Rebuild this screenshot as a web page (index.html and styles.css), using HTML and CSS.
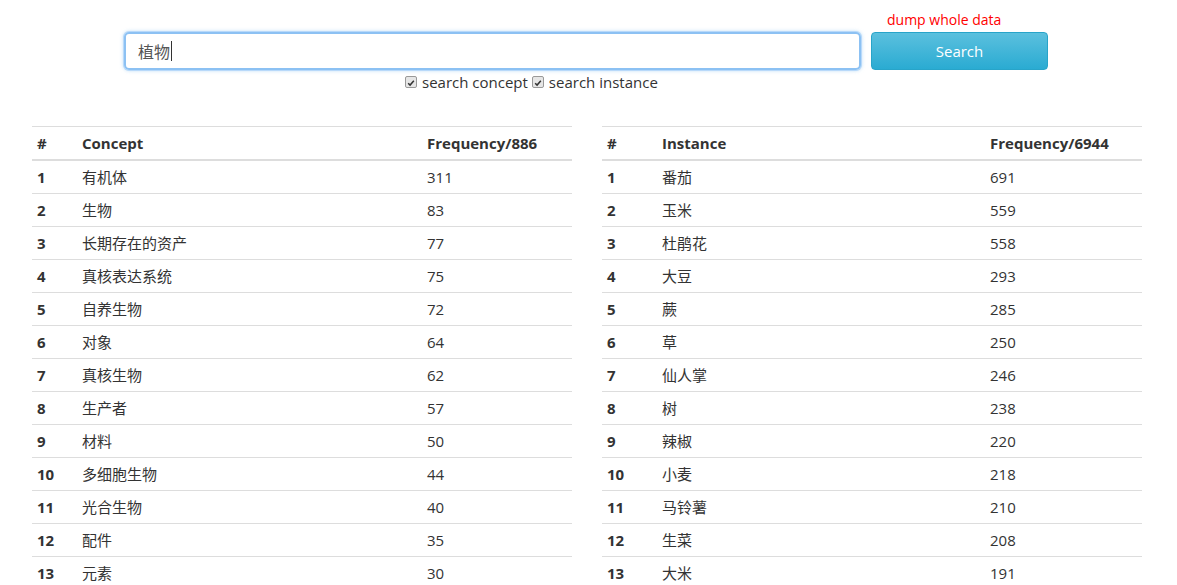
FILE: index.html
```html
<!DOCTYPE html>
<html lang="zh">
<head>
<meta charset="utf-8">
<title>Concept search</title>
<link rel="stylesheet" href="styles.css">
</head>
<body>
<div class="search-area">
  <div class="search-row">
    <div class="input-col">
      <div class="search-input">植物<span class="caret"></span></div>
    </div>
    <div class="button-col">
      <a class="dump-link" href="#">dump whole data</a>
      <button class="btn-search">Search</button>
    </div>
  </div>
  <div class="options">
    <label class="opt"><span class="check"><svg viewBox="0 0 12 12" width="12" height="12"><path d="M2.6 6.2 L4.9 8.5 L9.4 3.4" fill="none" stroke="#333" stroke-width="1.8"/></svg></span>search concept</label>
    <label class="opt"><span class="check"><svg viewBox="0 0 12 12" width="12" height="12"><path d="M2.6 6.2 L4.9 8.5 L9.4 3.4" fill="none" stroke="#333" stroke-width="1.8"/></svg></span>search instance</label>
  </div>
</div>
<div class="tables">
  <table class="result left">
    <thead><tr><th class="c-num">#</th><th class="c-name">Concept</th><th class="c-freq">Frequency/886</th></tr></thead>
    <tbody>
      <tr><th>1</th><td>有机体</td><td>311</td></tr>
      <tr><th>2</th><td>生物</td><td>83</td></tr>
      <tr><th>3</th><td>长期存在的资产</td><td>77</td></tr>
      <tr><th>4</th><td>真核表达系统</td><td>75</td></tr>
      <tr><th>5</th><td>自养生物</td><td>72</td></tr>
      <tr><th>6</th><td>对象</td><td>64</td></tr>
      <tr><th>7</th><td>真核生物</td><td>62</td></tr>
      <tr><th>8</th><td>生产者</td><td>57</td></tr>
      <tr><th>9</th><td>材料</td><td>50</td></tr>
      <tr><th>10</th><td>多细胞生物</td><td>44</td></tr>
      <tr><th>11</th><td>光合生物</td><td>40</td></tr>
      <tr><th>12</th><td>配件</td><td>35</td></tr>
      <tr><th>13</th><td>元素</td><td>30</td></tr>
    </tbody>
  </table>
  <table class="result right">
    <thead><tr><th class="c-num">#</th><th class="c-name">Instance</th><th class="c-freq">Frequency/6944</th></tr></thead>
    <tbody>
      <tr><th>1</th><td>番茄</td><td>691</td></tr>
      <tr><th>2</th><td>玉米</td><td>559</td></tr>
      <tr><th>3</th><td>杜鹃花</td><td>558</td></tr>
      <tr><th>4</th><td>大豆</td><td>293</td></tr>
      <tr><th>5</th><td>蕨</td><td>285</td></tr>
      <tr><th>6</th><td>草</td><td>250</td></tr>
      <tr><th>7</th><td>仙人掌</td><td>246</td></tr>
      <tr><th>8</th><td>树</td><td>238</td></tr>
      <tr><th>9</th><td>辣椒</td><td>220</td></tr>
      <tr><th>10</th><td>小麦</td><td>218</td></tr>
      <tr><th>11</th><td>马铃薯</td><td>210</td></tr>
      <tr><th>12</th><td>生菜</td><td>208</td></tr>
      <tr><th>13</th><td>大米</td><td>191</td></tr>
    </tbody>
  </table>
</div>
</body>
</html>
```
FILE: styles.css
```css
html { overflow: hidden; }
body {
  margin: 0;
  background: #fff;
  color: #333;
  font-family: "Open Sans", "Noto Sans CJK SC", sans-serif;
  font-size: 15px;
}
.search-area {
  padding-top: 10px;
}
.search-row {
  display: flex;
  padding-left: 124px;
  gap: 10px;
}
.input-col {
  padding-top: 22px;
}
.search-input {
  box-sizing: border-box;
  width: 737px;
  height: 38px;
  border: 2px solid #8cc1f3;
  border-radius: 5px;
  box-shadow: 0 0 0 1px rgba(180, 215, 250, 0.9), 0 0 4px rgba(102, 175, 233, 0.6);
  padding: 0 12px;
  display: flex;
  align-items: center;
  font-size: 16px;
  color: #555;
}
.caret {
  display: inline-block;
  width: 1px;
  height: 20px;
  background: #333;
  margin-left: 1px;
}
.button-col {
  display: flex;
  flex-direction: column;
  width: 177px;
}
.dump-link {
  display: block;
  height: 22px;
  line-height: 20px;
  padding-left: 16px;
  color: #f00;
  text-decoration: none;
  font-size: 14px;
}
.btn-search {
  box-sizing: border-box;
  height: 38px;
  width: 177px;
  border: 1px solid #28a4c9;
  border-radius: 4px;
  background: linear-gradient(#5bc0de, #2aabd2);
  color: #fff;
  font-family: inherit;
  font-size: 15px;
  padding: 0;
}
.options {
  display: flex;
  gap: 4px;
  padding-left: 405px;
  margin-top: 2px;
  height: 20px;
  align-items: center;
  color: #333;
}
.opt {
  display: flex;
  align-items: center;
  gap: 5px;
}
.check {
  box-sizing: border-box;
  width: 12px;
  height: 12px;
  border: 1px solid #999;
  border-radius: 2px;
  background: #e6e6e6;
  display: flex;
}
.check svg { display: block; }
.tables {
  display: flex;
  gap: 30px;
  padding-left: 32px;
  margin-top: 34px;
}
.result {
  width: 540px;
  border-collapse: collapse;
  border-spacing: 0;
}
.result th, .result td {
  padding: 5px;
  line-height: 22px;
  border-top: 1px solid #ddd;
  text-align: left;
  vertical-align: top;
}
.result th { font-weight: bold; }
.result thead th {
  border-bottom: 2px solid #ddd;
}
.left .c-num { width: 35px; }
.left .c-name { width: 335px; }
.right .c-num { width: 45px; }
.right .c-name { width: 318px; }
```
